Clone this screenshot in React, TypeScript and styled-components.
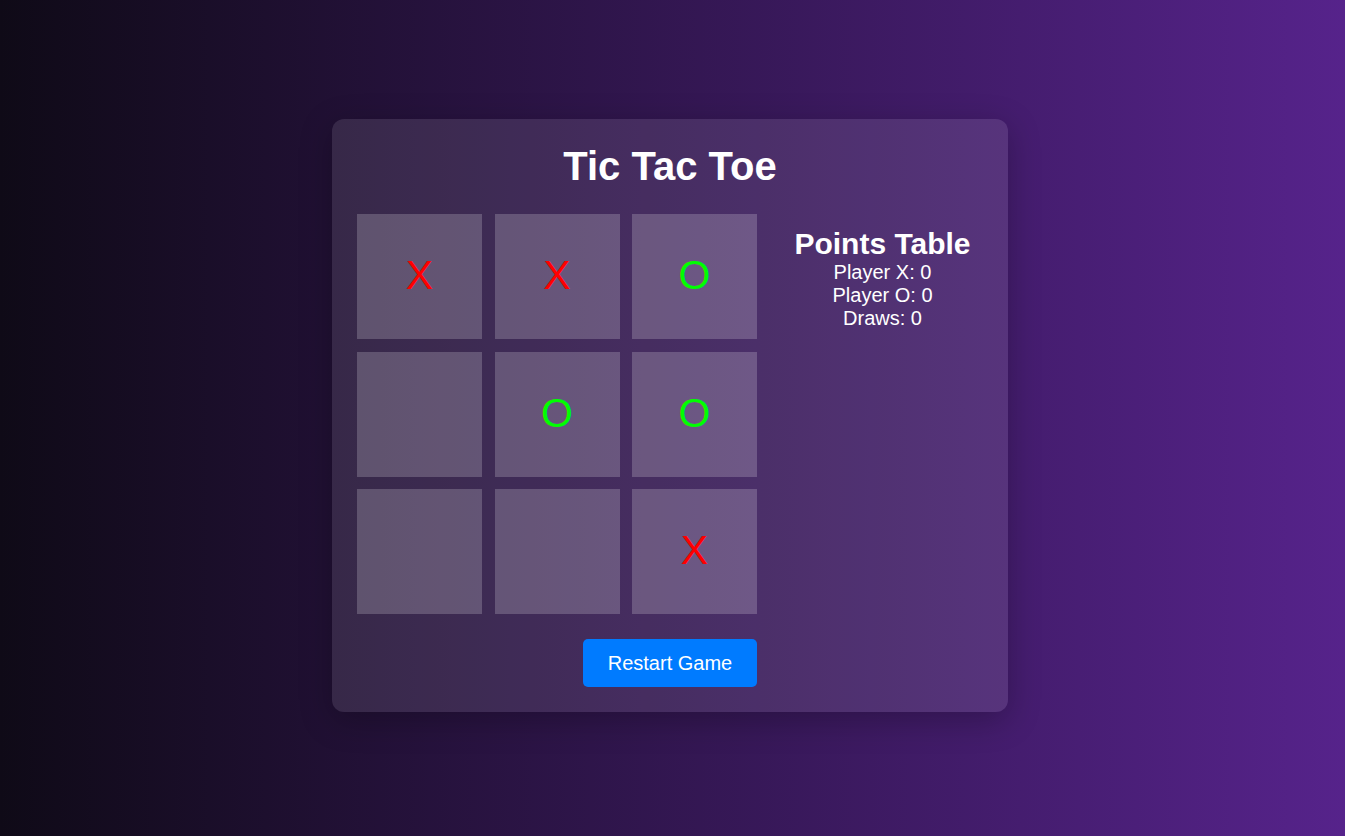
import React from "react";
import styled, { createGlobalStyle } from "styled-components";

const Global = createGlobalStyle`
  html, body { margin: 0; padding: 0; }
  body {
    font-family: "Liberation Sans", Arial, sans-serif;
    background: linear-gradient(to right, #0f0a17, #56238b);
    min-height: 100vh;
  }
`;

const Page = styled.div`
  min-height: 836px;
  box-sizing: border-box;
  padding: 0 5px 5px 0;
  display: flex;
  align-items: center;
  justify-content: center;
`;

const Card = styled.div`
  width: 676px;
  box-sizing: border-box;
  padding: 25px;
  border-radius: 12px;
  background: rgba(255, 255, 255, 0.1);
  box-shadow: 0 8px 32px rgba(0, 0, 0, 0.25);
  display: flex;
  flex-direction: column;
  align-items: center;
`;

const Title = styled.h1`
  margin: 0 0 25px;
  font-size: 40px;
  line-height: 45px;
  font-weight: 700;
  color: #ffffff;
`;

const Main = styled.div`
  display: flex;
  align-items: flex-start;
  width: 100%;
`;

const Board = styled.div`
  display: grid;
  grid-template-columns: repeat(3, 125px);
  grid-template-rows: repeat(3, 125px);
  gap: 12.5px;
`;

const Cell = styled.div<{ $mark: string }>`
  background: rgba(255, 255, 255, 0.2);
  display: flex;
  align-items: center;
  justify-content: center;
  font-size: 41px;
  line-height: 1;
  padding-bottom: 2px;
  color: ${(p) => (p.$mark === "X" ? "#ff0000" : "#00ff00")};
`;

const Points = styled.div`
  flex: 1;
  display: flex;
  flex-direction: column;
  align-items: center;
  color: #ffffff;
  padding-top: 13px;
  padding-left: 25px;
  font-size: 20px;
`;

const PointsTitle = styled.h2`
  margin: 0;
  font-size: 30px;
  line-height: 34px;
  font-weight: 700;
`;

const Line = styled.div`
  font-size: 20px;
  line-height: 23px;
`;

const Restart = styled.button`
  margin-top: 25px;
  width: 174px;
  height: 48px;
  border: none;
  border-radius: 5px;
  background: #007bff;
  color: #ffffff;
  font-family: "Liberation Sans", Arial, sans-serif;
  font-size: 20px;
  cursor: pointer;
`;

const board = ["X", "X", "O", "", "O", "O", "", "", "X"];

export default function App() {
  return (
    <>
      <Global />
      <Page>
        <Card>
          <Title>Tic Tac Toe</Title>
          <Main>
            <Board>
              {board.map((m, i) => (
                <Cell key={i} $mark={m}>
                  {m}
                </Cell>
              ))}
            </Board>
            <Points>
              <PointsTitle>Points Table</PointsTitle>
              <Line>Player X: 0</Line>
              <Line>Player O: 0</Line>
              <Line>Draws: 0</Line>
            </Points>
          </Main>
          <Restart>Restart Game</Restart>
        </Card>
      </Page>
    </>
  );
}
